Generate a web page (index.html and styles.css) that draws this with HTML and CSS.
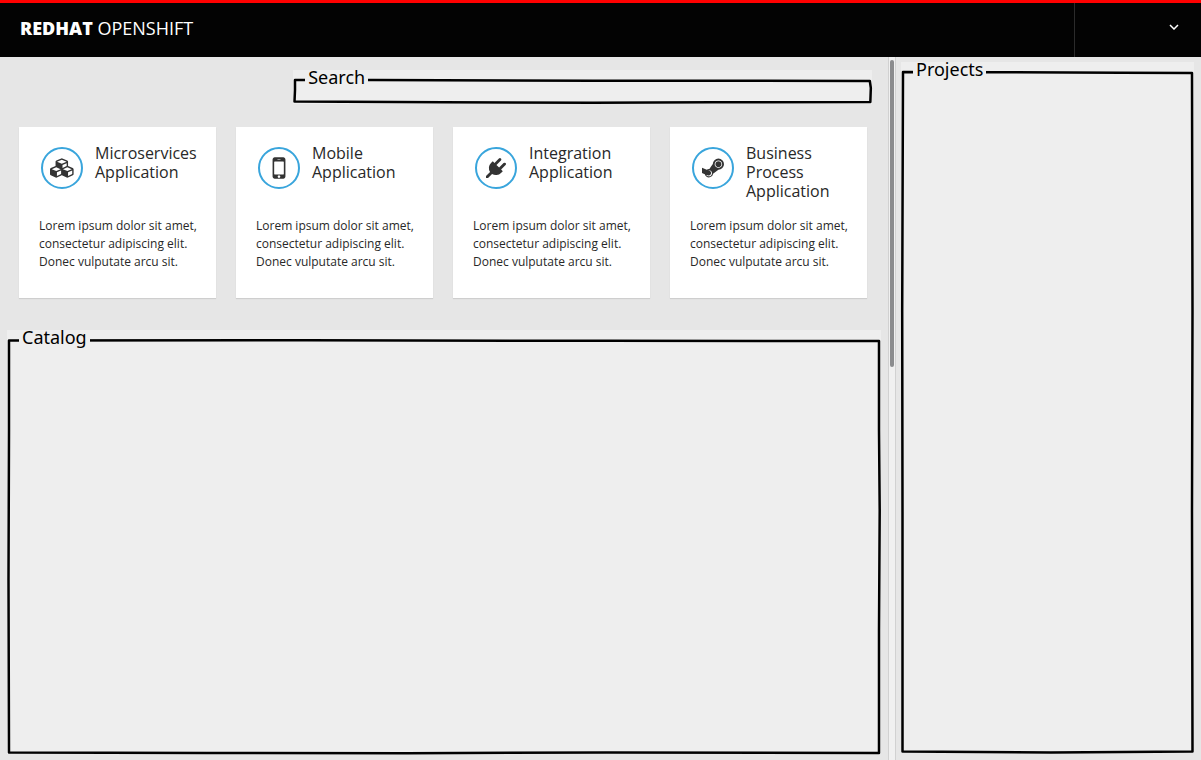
FILE: index.html
```html
<!DOCTYPE html>
<html lang="en">
<head>
<meta charset="utf-8">
<meta name="viewport" content="width=device-width, initial-scale=1">
<title>RedHat OpenShift</title>
<link rel="stylesheet" href="styles.css">
</head>
<body>
<header class="topbar">
  <a class="brand" href="#"><strong>REDHAT</strong> OPENSHIFT</a>
  <button class="user-menu" type="button" aria-label="User menu">
    <svg class="chevron" viewBox="0 0 10 6" aria-hidden="true"><path d="M1 1l4 4 4-4"/></svg>
  </button>
</header>
<div class="layout">
  <main class="content">
    <form class="frame search">
      <svg class="sketch" viewBox="0 0 579 34" preserveAspectRatio="none" aria-hidden="true"><path d="M2 10L80 10L300 10.800L450 10.800L577 11L578 18L577.500 32L420 32.200L300 32.700L150 32.200L1.500 31.500L2 20Z"/></svg>
      <label class="frame-label" for="search">Search</label>
      <input class="search-input" id="search" type="text">
    </form>
    <div class="cards">
      <article class="card">
        <div class="card-head">
          <span class="badge"><svg class="icon cubes" viewBox="0 0 2304 1792" aria-hidden="true"><path d="M640 1632l384-192v-314l-384 164v342zm-64-454l404-173-404-173-404 173zm1088 454l384-192v-314l-384 164v342zm-64-454l404-173-404-173-404 173zm-448-293l384-165v-266l-384 164v267zm-64-379l441-189-441-189-441 189zm1088 518v416q0 36-19 67t-52 47l-448 224q-25 14-57 14t-57-14l-448-224q-4-2-7-4-2 2-7 4l-448 224q-25 14-57 14t-57-14l-448-224q-33-16-52-47t-19-67v-416q0-38 21.500-70t56.500-48l434-186v-400q0-38 21.500-70t56.500-48l448-192q23-10 50-10t50 10l448 192q35 16 56.500 48t21.500 70v400l434 186q36 16 57 48t21 70z"/></svg></span>
          <h2 class="card-title">Microservices Application</h2>
        </div>
        <p class="card-text">Lorem ipsum dolor sit amet, consectetur adipiscing elit. Donec vulputate arcu sit.</p>
      </article>
      <article class="card">
        <div class="card-head">
          <span class="badge"><svg class="icon mobile" viewBox="0 0 1792 1792" aria-hidden="true"><path d="M976 1408q0-33-23.500-56.500t-56.500-23.500-56.500 23.500-23.500 56.500 23.500 56.500 56.500 23.500 56.500-23.500 23.500-56.500zm208-160v-704q0-13-9.500-22.500t-22.500-9.500h-512q-13 0-22.500 9.500t-9.500 22.500v704q0 13 9.500 22.500t22.500 9.500h512q13 0 22.500-9.500t9.500-22.500zm-192-848q0-16-16-16h-160q-16 0-16 16t16 16h160q16 0 16-16zm288-16v1024q0 52-38 90t-90 38h-512q-52 0-90-38t-38-90v-1024q0-52 38-90t90-38h512q52 0 90 38t38 90z"/></svg></span>
          <h2 class="card-title">Mobile Application</h2>
        </div>
        <p class="card-text">Lorem ipsum dolor sit amet, consectetur adipiscing elit. Donec vulputate arcu sit.</p>
      </article>
      <article class="card">
        <div class="card-head">
          <span class="badge"><svg class="icon plug" viewBox="0 0 1792 1792" aria-hidden="true"><path d="M1755 453q37 38 37 90.500t-37 90.500l-401 400 150 150-160 160q-163 163-389.500 186.500t-411.500-100.500l-362 362h-181v-181l362-362q-124-185-100.500-411.500t186.500-389.500l160-160 150 150 400-401q38-37 91-37t90 37 37 90.500-37 90.500l-400 401 234 234 401-400q38-37 91-37t90 37z"/></svg></span>
          <h2 class="card-title">Integration Application</h2>
        </div>
        <p class="card-text">Lorem ipsum dolor sit amet, consectetur adipiscing elit. Donec vulputate arcu sit.</p>
      </article>
      <article class="card">
        <div class="card-head">
          <span class="badge"><svg class="icon steam" viewBox="0 0 1792 1792" aria-hidden="true"><path d="M1582 582q0 101-71.500 172.500t-172.500 71.500-172.500-71.500-71.500-172.500 71.500-172.500 172.500-71.500 172.500 71.500 71.500 172.500zm-770 742q0-104-73-177t-177-73q-27 0-54 6l104 42q77 31 109.500 106.500t1.500 151.500q-31 77-107 109t-152 1q-21-8-62-24.500t-61-24.500q32 60 91 96.500t130 36.500q104 0 177-73t73-177zm830-741q0-126-89.500-215.500t-215.500-89.500q-127 0-216.500 89.500t-89.500 215.500q0 127 89.500 216t216.500 89q126 0 215.500-89t89.500-216zm150 0q0 189-133.500 322t-321.500 133l-437 319q-12 129-109 218t-229 89q-121 0-214-76t-118-192l-230-92v-429l389 157q79-48 173-48 13 0 35 2l284-407q2-187 135.500-319t320.500-132q188 0 321.500 133.500t133.500 321.500z"/></svg></span>
          <h2 class="card-title">Business Process Application</h2>
        </div>
        <p class="card-text">Lorem ipsum dolor sit amet, consectetur adipiscing elit. Donec vulputate arcu sit.</p>
      </article>
    </div>
    <section class="frame catalog">
      <svg class="sketch" viewBox="0 0 874 424" preserveAspectRatio="none" aria-hidden="true"><path d="M2 10.500L300 10.300L600 10.800L872 11L872 100L872.700 180L872 300L872 423L600 422.500L400 423.200L200 423L2 422.500L1.500 250L2 100Z"/></svg>
      <h2 class="frame-label">Catalog</h2>
    </section>
  </main>
  <div class="scrollbar" aria-hidden="true"><div class="thumb"></div></div>
  <aside class="side">
    <section class="frame projects">
      <svg class="sketch" viewBox="0 0 293 691" preserveAspectRatio="none" aria-hidden="true"><path d="M2 10L100 10.200L220 10.800L291 11L291.500 250L291 450L291.500 689.500L220 690L150 690.500L80 690L1.500 689.500L1.500 450L1.200 250Z"/></svg>
      <h2 class="frame-label">Projects</h2>
    </section>
  </aside>
</div>
</body>
</html>
```
FILE: styles.css
```css
* {
  box-sizing: border-box;
}

body {
  margin: 0;
  min-height: 100vh;
  display: flex;
  flex-direction: column;
  background: #e6e6e6;
  color: #282828;
  font-family: "Open Sans", "Noto Sans", sans-serif;
}

.topbar {
  display: flex;
  justify-content: space-between;
  height: 57px;
  border-top: 3px solid #f00;
  background: #030303;
}

.brand {
  align-self: center;
  padding: 0 0 4px 20px;
  color: #fff;
  font-family: "Open Sans", sans-serif;
  font-size: 18px;
  font-weight: 400;
  line-height: 24px;
  text-decoration: none;
}

.brand strong {
  font-weight: 800;
}

.user-menu {
  display: flex;
  align-items: center;
  justify-content: flex-end;
  width: 127px;
  padding: 0 22px 6px 0;
  border: 0;
  border-left: 1px solid #2b2b2b;
  background: none;
}

.chevron {
  width: 10px;
  height: 6px;
  fill: none;
  stroke: #fff;
  stroke-width: 1.5;
}

.layout {
  flex: 1;
  display: flex;
}

.content {
  flex: 1;
  display: flex;
  flex-direction: column;
  min-width: 0;
  padding: 13px 7px 6px;
}

/* Hand-drawn panels */
.frame {
  position: relative;
  background: #eee;
}

.sketch {
  position: absolute;
  inset: 0;
  width: 100%;
  height: 100%;
  overflow: visible;
  fill: none;
  stroke: #000;
  stroke-width: 2.5;
  stroke-linejoin: round;
  pointer-events: none;
}

.sketch path {
  vector-effect: non-scaling-stroke;
}

.frame-label {
  position: relative;
  display: block;
  width: max-content;
  margin: 0 0 0 12px;
  padding: 0 3px;
  background: #eee;
  color: #000;
  font-family: "Noto Sans", sans-serif;
  font-size: 18px;
  font-weight: 400;
  line-height: 14px;
}

.search {
  align-self: flex-end;
  width: calc(66% + 2px);
  height: 34px;
  margin-right: 9px;
}

.search-input {
  display: block;
  width: calc(100% - 12px);
  height: 14px;
  margin: 0 6px;
  padding: 0;
  border: 0;
  outline: 0;
  background: none;
  font-size: 12px;
}

.cards {
  display: grid;
  grid-template-columns: repeat(4, 1fr);
  gap: 20px;
  margin: 23px 14px 32px 12px;
}

.card {
  padding: 17px 16px 27px 20px;
  background: #fff;
  box-shadow: 0 1px 1px rgba(0, 0, 0, 0.1);
}

.card-head {
  display: flex;
  gap: 12px;
  min-height: 57px;
  padding-left: 2px;
}

.badge {
  flex: none;
  display: flex;
  align-items: center;
  justify-content: center;
  width: 42px;
  height: 42px;
  margin-top: 3px;
  border: 2px solid #39a5dc;
  border-radius: 50%;
}

.icon {
  flex: none;
  fill: #333;
}

.cubes {
  width: 25px;
  height: 20px;
}

.mobile {
  width: 30px;
  height: 30px;
}

.plug {
  width: 20px;
  height: 20px;
}

.steam {
  width: 22px;
  height: 22px;
}

.card-title {
  margin: 0;
  font-size: 16px;
  font-weight: 400;
  line-height: 19px;
}

.card-text {
  margin: 16px 0 0;
  font-size: 12px;
  line-height: 18px;
}

.catalog {
  flex: 1;
}

.scrollbar {
  width: 8px;
  padding: 3px 1px;
  border: 1px solid #d1d1d1;
  border-width: 0 1px;
  background: #f0f0f0;
}

.thumb {
  height: 44%;
  border-radius: 2px;
  background: #8b8c8e;
}

.side {
  display: flex;
  width: 305px;
  padding: 5px 7px 7px 5px;
}

.projects {
  flex: 1;
}
```
